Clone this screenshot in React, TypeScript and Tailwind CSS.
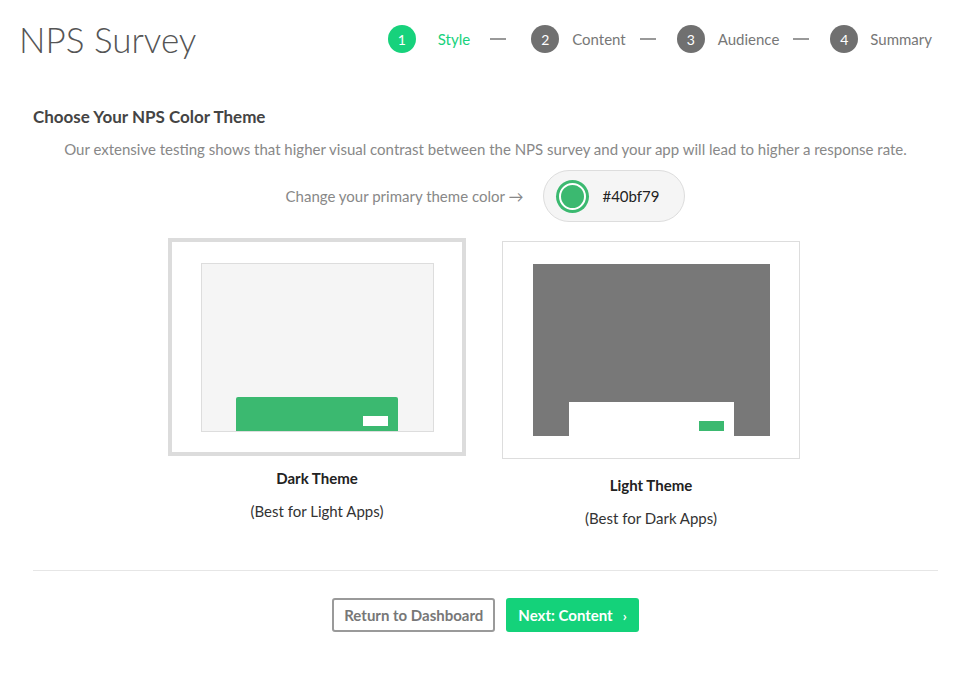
import React from "react";

const steps = [
  { n: 1, label: "Style", active: true },
  { n: 2, label: "Content", active: false },
  { n: 3, label: "Audience", active: false },
  { n: 4, label: "Summary", active: false },
];

function Stepper() {
  return (
    <div className="flex items-center">
      {steps.map((s, i) => (
        <div key={s.n} className="flex items-center">
          <div
            className={`flex h-[28px] w-[28px] items-center justify-center rounded-full text-[14px] text-white ${
              s.active ? "bg-[#17d27c]" : "bg-[#707070]"
            }`}
          >
            {s.n}
          </div>
          <span
            className={`text-[15px] ${
              s.active
                ? "ml-[22px] text-[#17d27c]"
                : i === 3
                  ? "ml-[12px] text-[#777]"
                  : "ml-[13px] text-[#777]"
            }`}
          >
            {s.label}
          </span>
          {i < steps.length - 1 && (
            <span
              className={`h-[2px] w-[16px] bg-[#999] ${
                s.active ? "ml-[20px] mr-[25px]" : "ml-[14px] mr-[21px]"
              }`}
            />
          )}
        </div>
      ))}
    </div>
  );
}

function ThemeCard({
  dark,
  selected,
  title,
  sub,
}: {
  dark: boolean;
  selected: boolean;
  title: string;
  sub: string;
}) {
  return (
    <div className={`flex flex-col items-center ${selected ? "" : "mt-[3px]"}`}>
      <div
        className={`flex h-[218px] w-[298px] items-start justify-center bg-white ${
          selected
            ? "border-[4px] border-[#dcdcdc] pt-[21px]"
            : "border border-[#dddddd] pt-[22px]"
        }`}
      >
        {dark ? (
          <div className="flex h-[169px] w-[233px] items-end justify-center border border-[#dddddd] bg-[#f5f5f5]">
            <div className="flex h-[34px] w-[162px] items-end justify-end rounded-t-[2px] bg-[#3bb970] pb-[5px] pr-[10px]">
              <div className="h-[10px] w-[25px] bg-white" />
            </div>
          </div>
        ) : (
          <div className="flex h-[172px] w-[237px] items-end justify-center bg-[#787878]">
            <div className="flex h-[34px] w-[165px] items-end justify-end bg-white pb-[5px] pr-[10px]">
              <div className="h-[10px] w-[25px] bg-[#3bb970]" />
            </div>
          </div>
        )}
      </div>
      <div
        className={`text-[15px] font-bold text-[#222] ${
          selected ? "mt-[11px]" : "mt-[15px]"
        }`}
      >
        {title}
      </div>
      <div className="mt-[10px] text-[15px] text-[#333]">{sub}</div>
    </div>
  );
}

export default function App() {
  return (
    <div className="h-[678px] w-[960px] bg-white font-['Lato',sans-serif]">
      <header className="flex items-center justify-between pl-[19px] pr-[28px] pt-[13px]">
        <h1 className="text-[35px] font-light leading-[52px] text-[#555]">
          NPS Survey
        </h1>
        <Stepper />
      </header>

      <main className="pl-[33px] pr-[22px]">
        <h2 className="mt-[39px] text-[17px] font-bold text-[#444]">
          Choose Your NPS Color Theme
        </h2>
        <p className="mt-[8px] text-center text-[15px] text-[#888]">
          Our extensive testing shows that higher visual contrast between the
          NPS survey and your app will lead to higher a response rate.
        </p>

        <div className="mt-[10px] flex items-center justify-center">
          <span className="text-[15px] text-[#888]">
            Change your primary theme color →
          </span>
          <div className="ml-[20px] flex h-[52px] w-[142px] items-center rounded-full border border-[#dddddd] bg-[#f5f5f5] pl-[12px]">
            <div className="flex h-[33px] w-[33px] items-center justify-center rounded-full bg-[#3bb970]">
              <div className="h-[27px] w-[27px] rounded-full border-2 border-white bg-[#3bb970]" />
            </div>
            <span className="ml-[13px] text-[15px] text-[#222]">#40bf79</span>
          </div>
        </div>

        <div className="mt-[16px] flex items-start justify-center gap-[36px] pr-[3px]">
          <ThemeCard
            dark
            selected
            title="Dark Theme"
            sub="(Best for Light Apps)"
          />
          <ThemeCard
            dark={false}
            selected={false}
            title="Light Theme"
            sub="(Best for Dark Apps)"
          />
        </div>

        <div className="mt-[41px] h-px w-full bg-[#e6e6e6]" />

        <div className="mt-[27px] flex items-center justify-center gap-[11px]">
          <button className="h-[34px] rounded-[3px] border-2 border-[#9a9a9a] bg-white px-[10px] text-[15px] font-bold text-[#777]">
            Return to Dashboard
          </button>
          <button className="flex h-[34px] items-center rounded-[3px] bg-[#14d27a] px-[12px] text-[15px] font-bold text-white">
            Next: Content
            <span className="ml-[10px] text-[14px]">›</span>
          </button>
        </div>
      </main>
    </div>
  );
}
